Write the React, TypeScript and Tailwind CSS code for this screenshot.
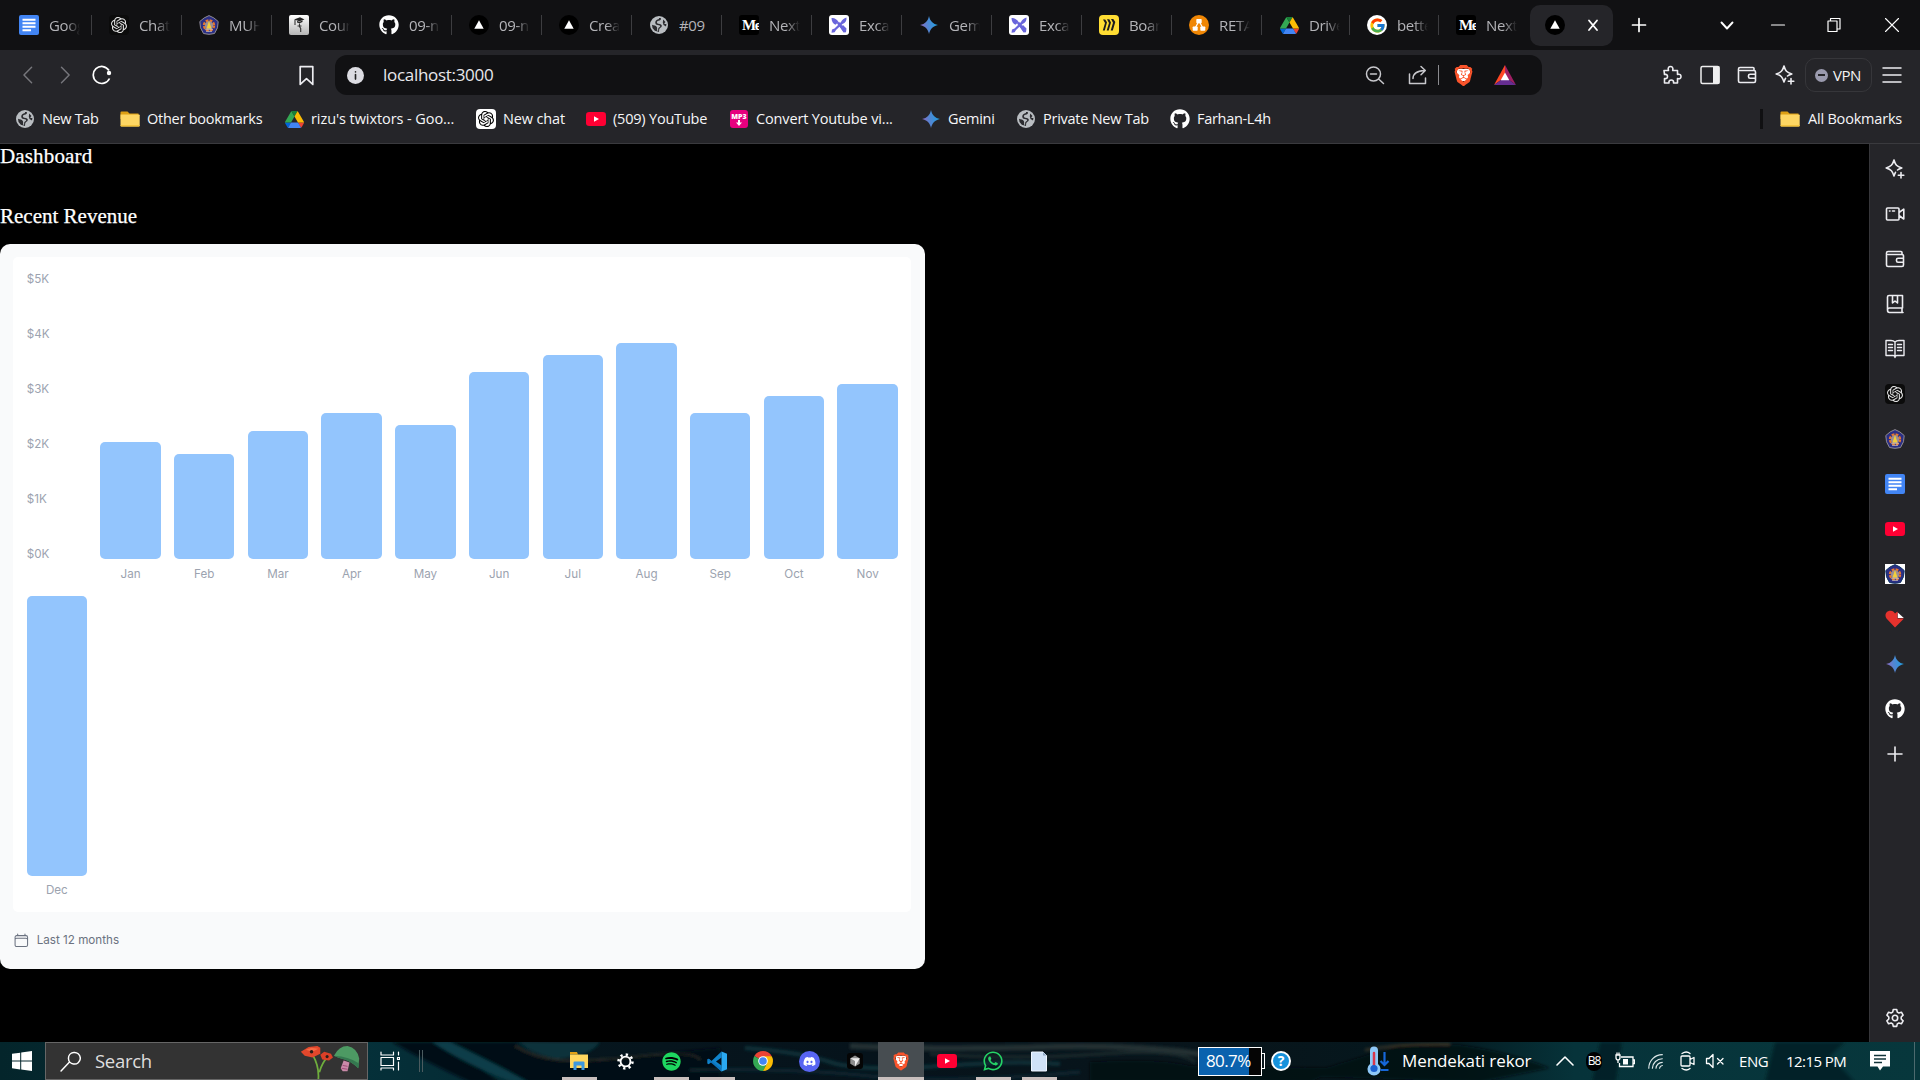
import React from 'react';
import { FcGoogle } from 'react-icons/fc';
import { FaDiscord, FaGithub, FaSpotify, FaWhatsapp } from 'react-icons/fa';
import { SiBrave, SiOpenai } from 'react-icons/si';

/* ---------- brand icons ---------- */

const Docs = () => (
  <svg viewBox="0 0 20 20" className="h-5 w-5">
    <rect width="20" height="20" rx="2" fill="#4285f4" />
    <path d="M3.5 4.7h13M3.5 8.3h13M3.5 11.8h13M3.5 15.3h8.5" stroke="#fff" strokeWidth="1.9" />
  </svg>
);

const ChatGpt = ({ light = false }: { light?: boolean }) => (
  <span className={`flex h-5 w-5 items-center justify-center rounded-[4px] ${light ? 'bg-white text-black' : 'bg-[#0b0b0b] text-[#e4e4e4]'}`}>
    <SiOpenai size={16} />
  </span>
);

const Emblem = ({ boxed = false }: { boxed?: boolean }) => (
  <svg viewBox="0 0 20 20" className="h-5 w-5">
    {boxed && <rect width="20" height="20" fill="#fff" />}
    <path d="M10 .6Q15 2.200 19.200 6.500 19.600 13 15.500 18.500 10 20.200 4.500 18.500.4 13 .8 6.500 5 2.200 10 .6Z" fill="#2b2f86" stroke={boxed ? '#123a63' : '#8f8a8c'} strokeWidth="1" strokeLinejoin="round" />
    <circle cx="10" cy="10.400" r="5" fill="none" stroke="#e8772e" strokeWidth="2.400" strokeDasharray="2.700 1.230" />
    <circle cx="10" cy="10.400" r="4.200" fill="#9b8f94" />
    <path d="M10 5.500 11 9l1.500 4.500h-5L9 9Z" fill="#f3cf3a" />
    <path d="M6 14.200h8M7 16.300h6" stroke="#d7cfc3" strokeWidth=".8" />
  </svg>
);

const Course = () => (
  <svg viewBox="0 0 20 20" className="h-5 w-5">
    <defs>
      <linearGradient id="course" x1="0" y1="0" x2="0" y2="1">
        <stop stopColor="#fff" />
        <stop offset="1" stopColor="#b5b5b5" />
      </linearGradient>
    </defs>
    <rect width="20" height="20" rx="2" fill="url(#course)" />
    <path d="m5 4.500 6-2.200L15.500 4.500l-5 1.800ZM8 6v1.500l2.500.8 3-1.200V5.500l-3 1.300Z" fill="#222" />
    <path d="M6 5v5M10.500 8.500v3l1.200 2V17M8.500 11h4" stroke="#333" strokeWidth="1.100" fill="none" />
  </svg>
);

const Next = () => (
  <svg viewBox="0 0 20 20" className="h-5 w-5 shrink-0">
    <circle cx="10" cy="10" r="10" fill="#000" />
    <path d="M10 5.200 14.700 13.800H5.300Z" fill="#fff" />
  </svg>
);

const Globe = () => (
  <svg viewBox="0 0 18 18" className="h-[18px] w-[18px]">
    <circle cx="9" cy="9" r="9" fill="#b9bdc1" />
    <path d="M10.800 2C11.500 4 10 4.600 8.500 4.700 6.500 5 6.500 7.500 8.300 7.700 10.500 7.800 12.200 8.500 11.800 10.300 11.300 12 9.500 11.800 9.200 13.500L9 16 4.800 14.800 2.500 12 2 8.800C4 9.500 5.800 9.600 6.800 11 7.500 12.300 6.800 13 7.200 14.500L8 15.500 8.200 12.500C8.500 11.200 10.300 11 10.200 10 10 9 8 9.300 6.500 8.700 4.500 7.700 5 4.200 7.500 3.500 8.800 3.100 9.200 3 9 2ZM13.200 3.500 15.500 6 14.200 7.500C15 8.300 16 8 16.500 7.800L16 10.500 13.500 9 12.800 6.500Z" fill="#2c2c30" />
  </svg>
);

const Medium = () => (
  <span className="flex h-5 w-5 items-center overflow-hidden rounded-[3px] bg-black pl-[3px] font-['Liberation_Serif'] text-[15px] font-bold leading-5 tracking-[-1.500px] text-white">
    Me
  </span>
);

const Excalidraw = () => (
  <svg viewBox="0 0 20 20" className="h-5 w-5">
    <rect width="20" height="20" rx="3" fill="#fff" />
    <path d="M2.500 3C5 2.500 8.500 4.500 9.500 7L6.500 9.800C4 9 2.500 6 2.500 3ZM8 8.500l2-1.800 6.500 8-2 2.300Z" fill="#6965db" />
    <path d="M17.500 2.500C15 3 13 5 12 7l-6.500 6.500-2.500 1-.5 3.200 3.200-.5 1.300-2.200L13.500 9C16.500 8 17.800 5.500 17.500 2.500ZM11.500 12.500l2.500-2.500 3.500 3.500-.5 3.700-2.500.3Z" fill="#6965db" />
  </svg>
);

const Gemini = () => (
  <svg viewBox="0 0 18 18" className="h-[18px] w-[18px]">
    <defs>
      <linearGradient id="gemini" x1="0" y1=".6" x2="1" y2=".4">
        <stop stopColor="#9168c0" />
        <stop offset=".4" stopColor="#5684d1" />
        <stop offset="1" stopColor="#1ba1e3" />
      </linearGradient>
    </defs>
    <path d="M9 0C10 5 13 8 18 9 13 10 10 13 9 18 8 13 5 10 0 9 5 8 8 5 9 0Z" fill="url(#gemini)" />
  </svg>
);

const Miro = () => (
  <svg viewBox="0 0 20 20" className="h-5 w-5">
    <rect width="20" height="20" rx="4" fill="#ffdd33" />
    <path d="M4 4.500h2.200L8 7.300 5.800 15.500H3.800L6 8ZM8 4.200h2.300L12 7.500 9.700 15.500H7.700L10 8ZM12 4H14.300L16.300 7 13.800 15.500H11.700L14 7.700Z" fill="#1c1c1e" />
  </svg>
);

const Drawio = () => (
  <svg viewBox="0 0 20 20" className="h-5 w-5">
    <circle cx="10" cy="10" r="10" fill="#f08705" />
    <path d="M10 6 6.200 13M10 6l3.800 7" stroke="#fff" strokeWidth="1.300" />
    <rect x="7.300" y="4" width="5.400" height="4.300" rx=".7" fill="#fff" />
    <rect x="3.700" y="11.500" width="5" height="4.300" rx=".7" fill="#fff" />
    <rect x="11.300" y="11.500" width="5" height="4.300" rx=".7" fill="#fff" />
  </svg>
);

const Drive = () => (
  <svg viewBox="0 0 87.300 78" className="h-[17px] w-[19px]">
    <path d="m6.600 66.850 3.850 6.650c.8 1.400 1.950 2.500 3.300 3.300l13.750-23.800h-27.500c0 1.550.4 3.100 1.200 4.500z" fill="#0066da" />
    <path d="m43.650 25-13.750-23.800c-1.350.8-2.500 1.900-3.300 3.300l-25.400 44a9.060 9.060 0 0 0 -1.200 4.500h27.500z" fill="#34a853" />
    <path d="m73.550 76.800c1.350-.8 2.500-1.900 3.300-3.300l1.600-2.750 7.650-13.250c.8-1.400 1.200-2.950 1.200-4.500h-27.502l5.852 11.500z" fill="#ea4335" />
    <path d="m43.650 25 13.750-23.800c-1.350-.8-2.900-1.200-4.500-1.200h-18.500c-1.600 0-3.150.45-4.500 1.200z" fill="#188038" />
    <path d="m59.800 53h-32.300l-13.750 23.800c1.350.8 2.900 1.200 4.500 1.200h50.800c1.600 0 3.150-.45 4.500-1.200z" fill="#4285f4" />
    <path d="m73.400 26.500-12.700-22c-.8-1.400-1.950-2.500-3.300-3.300l-13.750 23.800 16.150 28h27.450c0-1.550-.4-3.100-1.200-4.500z" fill="#fbbc04" />
  </svg>
);

const GoogleG = () => (
  <span className="flex h-5 w-5 items-center justify-center rounded-full bg-white">
    <FcGoogle size={17} />
  </span>
);

const Github = () => <FaGithub size={20} color="#fff" />;

const Folder = () => (
  <svg viewBox="0 0 20 16" className="h-4 w-5">
    <path d="M.5 1.500Q.5.500 1.500.5h6l2 2H18.500V8H.5Z" fill="#dd9f13" />
    <path d="M.5 3.500H19q.7 0 .7.8V14.500q0 1-1 1H1.500q-1 0-1-1Z" fill="#fdd663" />
    <path d="M.5 14H19.700V14.500q0 1-1 1H1.500q-1 0-1-1Z" fill="#f4c33d" />
  </svg>
);

const Youtube = () => (
  <svg viewBox="0 0 20 14" className="h-[14px] w-5">
    <rect width="20" height="14" rx="3.200" fill="#ff0033" />
    <path d="m8 4.200 5 2.800-5 2.800Z" fill="#fff" />
  </svg>
);

const Mp3 = () => (
  <span className="flex h-[18px] w-[18px] flex-col items-center rounded-[3px] bg-[#e6007e] pt-[3px] text-white">
    <span className="font-['Open_Sans'] text-[7px] font-extrabold leading-[7px]">MP3</span>
    <svg viewBox="0 0 8 6" className="h-[6px] w-2">
      <path d="M3 0h2v2.500h2L4 6 1 2.500h2Z" fill="#fff" />
    </svg>
  </span>
);

const Brave = ({ size = 'h-[23px] w-[21px]' }: { size?: string }) => (
  <span className={`relative flex items-center justify-center ${size}`}>
    <span className="absolute inset-x-[4px] bottom-[6px] top-[5px] bg-white" />
    <SiBrave color="#fb542b" className="relative h-full w-full" />
  </span>
);

const BraveRewards = () => (
  <svg viewBox="0 0 22 20" className="h-5 w-[22px]">
    <path d="M11 0 0 20 11 12Z" fill="#ff4724" />
    <path d="M11 0 22 20 11 12Z" fill="#9e1f63" />
    <path d="M0 20 11 12 22 20Z" fill="#662d91" />
    <path d="M11 7.500 15.300 15.300H6.700Z" fill="#fff" />
  </svg>
);

const Heart = () => (
  <svg viewBox="0 0 20 18" className="h-[18px] w-5">
    <path d="M10 17.500 1.500 8.500C-1 5 1.500.5 5.500.8 8 1 9.500 2.500 10 3.500L12.500 2.200V8.500H18.800L17.500 10Z" fill="#e5322d" />
    <path d="M10 3.500 12.500 1.500V4Z" fill="#e5322d" />
    <path d="M12.800 2.500 18.800 8H12.800Z" fill="#fff" />
  </svg>
);

const Chrome = () => (
  <svg viewBox="0 0 20 20" className="h-5 w-5">
    <path d="M10 10 1.340 5A10 10 0 0 1 18.660 5Z" fill="#ea4335" />
    <path d="M10 20A10 10 0 0 1 1.340 5L10 10 14 12.500Z" fill="#34a853" />
    <path d="M10 5.300H18.800A10 10 0 0 1 10 20L14.100 12.300Z" fill="#fbbc04" />
    <circle cx="10" cy="10" r="4.800" fill="#fff" />
    <circle cx="10" cy="10" r="3.800" fill="#4285f4" />
  </svg>
);

const Explorer = () => (
  <svg viewBox="0 0 18 18" className="h-[18px] w-[18px]">
    <path d="M0 0h7l1 2.500H0Z" fill="#e0a116" />
    <path d="M0 2.500H18V16H0Z" fill="#ffd75e" />
    <path d="M3.500 18V10.500q0-1 1-1h9q1 0 1 1V18h-3v-4.500h-5V18Z" fill="#3d98de" />
  </svg>
);

const VsCode = () => (
  <svg viewBox="0 0 20 20" className="h-[21px] w-5">
    <path d="M14.500 0 4.500 9.500 1.700 7.300.3 8.100v3.800l1.400.8 2.800-2.200L14.500 20V14L9 10l5.500-4Z" fill="#0f83cc" />
    <path d="M.3 8.100 1.700 7.300 14.500 17V20L.3 8.100Z" fill="#0b74bd" />
    <path d="M14.500 0 20 2.300V17.700L14.500 20Z" fill="#2aa9f2" />
  </svg>
);

const Cursor = () => (
  <svg viewBox="0 0 16 16" className="h-4 w-4">
    <rect width="16" height="16" rx="3" fill="#050505" />
    <path d="M8 2.500 12.700 5.200V10.800L8 13.500 3.300 10.800V5.200Z" fill="#8d8d8d" />
    <path d="M3.300 5.200H12.700L8 13.500V8Z" fill="#eee" />
  </svg>
);

const Paper = () => (
  <svg viewBox="0 0 16 20" className="h-[21px] w-4">
    <path d="M.5.500H12L15.500 4V19.500H.5Z" fill="#cfe2f7" stroke="#eef6ff" />
    <path d="M12 .5V4h3.500Z" fill="#90a9c6" />
  </svg>
);

/* ---------- line icons ---------- */

type LineProps = { d: string; size?: string; box?: string; width?: number; color?: string };

const Line = ({ d, size = 'h-5 w-5', box = '0 0 20 20', width = 1.6, color = '#ededf1' }: LineProps) => (
  <svg viewBox={box} className={`${size} shrink-0`} fill="none" stroke={color} strokeWidth={width} strokeLinecap="round" strokeLinejoin="round">
    <path d={d} />
  </svg>
);

const sparkle = 'M9 1C10.500 6 11.500 7.500 16.800 9 15 9.600 13.500 10.200 12.500 11M9 1C7.500 6 6 7.500 1.200 9c5 1.500 6.300 3 7.800 8 .5-1.500 1-2.800 1.500-3.700M16 13.500v5.500M13.300 16.200h5.500';
const camera = 'M2.500 4H13q1 0 1 1v10q0 1-1 1H2.500q-1 0-1-1V5q0-1 1-1ZM14 8.500 18.800 5.200V15L14 11.500M4.500 7h.5M7.500 7h2';
const wallet = 'M17 5.500V3.500q0-1-1-1H3Q1.500 2.500 1.500 4V16q0 1.500 1.500 1.500H17q1.500 0 1.500-1.500V7q0-1.500-1.500-1.500H3M18.500 9.200H13q-1.500 0-1.500 1.500v1q0 1.500 1.500 1.500h5.500';
const savedBook = 'M17.500 14H4.500Q2.500 14 2.500 16V3q0-1.500 1.500-1.500H17.500ZM2.500 16q0 2.500 2 2.500H18M17 14v4.500M7.500 1.500V9L10 7l2.500 2V1.500';
const reader = 'M10 3Q8.500 1.500 6 1.500H1V16.500H8Q10 16.500 10 18.500 10 16.500 12 16.500h7V1.500H14Q11.500 1.500 10 3ZM10 3V17M3.500 5.500h4M3.500 8.500h4M3.500 11.500h4M12.500 5.500h4M12.500 8.500h4M12.500 11.500h4';
const puzzle = 'M2 5.500H6.500C5.500 2.500 7 1.500 8.500 1.500S11.500 2.500 10.700 5.500H15.500V9.500C18 8.700 19 10 19 11.500S18 14.300 15.500 13.500V18H11.500C12 15.500 10.500 15 9.300 15S6.500 15.500 7 18H2.500V13.500C5 14 5.500 12.500 5.500 11.500S5 9 2.500 9.500Z';
const gear = 'M8.300 1.500h3.400l.6 2.600 1.600.9 2.500-.8 1.700 2.900-1.900 1.900v2l1.900 1.900-1.700 2.900-2.500-.8-1.600.9-.6 2.500H8.300l-.6-2.500-1.600-.9-2.500.8-1.700-2.900L3.800 11V9L1.900 7.100l1.700-2.900 2.500.8 1.600-.9ZM12.700 10a2.700 2.700 0 1 1-5.400 0 2.700 2.700 0 0 1 5.400 0Z';

/* ---------- tab strip ---------- */

const tabs: { icon: React.ReactNode; label: string; width: string }[] = [
  { icon: <Docs />, label: 'Goog', width: 'w-[90px]' },
  { icon: <ChatGpt />, label: 'Chat', width: 'w-[90px]' },
  { icon: <Emblem />, label: 'MUH', width: 'w-[90px]' },
  { icon: <Course />, label: 'Cour', width: 'w-[90px]' },
  { icon: <Github />, label: '09-n', width: 'w-[90px]' },
  { icon: <Next />, label: '09-n', width: 'w-[90px]' },
  { icon: <Next />, label: 'Crea', width: 'w-[90px]' },
  { icon: <Globe />, label: '#09', width: 'w-[90px]' },
  { icon: <Medium />, label: 'Next', width: 'w-[90px]' },
  { icon: <Excalidraw />, label: 'Exca', width: 'w-[90px]' },
  { icon: <Gemini />, label: 'Gem', width: 'w-[90px]' },
  { icon: <Excalidraw />, label: 'Exca', width: 'w-[90px]' },
  { icon: <Miro />, label: 'Boar', width: 'w-[90px]' },
  { icon: <Drawio />, label: 'RETA', width: 'w-[90px]' },
  { icon: <Drive />, label: 'Drive', width: 'w-[88px]' },
  { icon: <GoogleG />, label: 'bette', width: 'w-[89px]' },
  { icon: <Medium />, label: 'Next', width: 'w-[88px]' },
];

const TabStrip = () => (
  <div className="flex h-[50px] shrink-0 items-center bg-[#111113] pl-[2px]">
    {tabs.map((t, i) => (
      <div key={i} className={`flex h-5 shrink-0 items-center border-r pl-[17px] ${i === tabs.length - 1 ? 'border-transparent' : 'border-[#3d3d40]'} ${t.width}`}>
        <span className="flex w-5 shrink-0 justify-center">{t.icon}</span>
        <span className={`ml-[10px] w-[31px] overflow-hidden whitespace-nowrap text-[15px] tracking-[-0.35px] text-[#b4b4b8] ${t.label === '#09' ? '' : '[mask-image:linear-gradient(to_right,black_55%,transparent)]'}`}>{t.label}</span>
      </div>
    ))}
    <div className="ml-[3px] flex h-[41px] w-[83px] shrink-0 items-center rounded-[10px] bg-[#252529] pl-[15px]">
      <Next />
      <Line d="m6 5.500 8 9.500M14 5.500l-8 9.500" size="ml-[18px] h-5 w-5" width={1.8} color="#fff" />
    </div>
    <Line d="M10 3.500v13M3.500 10h13" size="ml-[16px] h-5 w-5" width={1.7} color="#fff" />
    <Line d="m4.500 7.500 5.500 6 5.500-6" size="ml-[68px] h-5 w-5" width={1.9} color="#fff" />
    <Line d="M3.500 10h13" size="ml-[31px] h-5 w-5" width={1.2} color="#fff" />
    <Line d="M4 6h9v10.500H4ZM6.500 6V3.500H16V14H13" size="ml-[36px] h-5 w-5" width={1.2} color="#fff" />
    <Line d="m3.500 3.500 13 13M16.500 3.500l-13 13" size="ml-[38px] h-5 w-5" width={1.1} color="#fff" />
  </div>
);

/* ---------- toolbar ---------- */

const Toolbar = () => (
  <div className="flex h-[50px] shrink-0 items-center">
    <Line d="M14 1.500 5.500 10l8.500 8.500" size="ml-[19px] h-5 w-[18px]" color="#77777c" />
    <Line d="M5 1.500 13.500 10 5 18.500" size="ml-[20px] h-5 w-[18px]" color="#77777c" />
    <svg viewBox="0 0 20 20" className="ml-[17px] h-5 w-5 shrink-0" fill="none" stroke="#fff" strokeWidth="1.700">
      <path d="M17 5.500A8.500 8.500 0 1 0 17.500 13.500" />
      <circle cx="17" cy="8" r="2.200" fill="#fff" stroke="none" />
    </svg>
    <Line d="M4 1.500h12V18.500L10 13 4 18.500Z" size="ml-[184px] h-[21px] w-[21px]" width={1.6} />
    <div className="ml-[18px] flex h-10 w-[1207px] shrink-0 items-center rounded-[12px] bg-[#111113]">
      <span className="ml-[12px] flex h-[17px] w-[17px] items-center justify-center rounded-full bg-[#dcdce2]">
        <Line d="M10 8.500v7M10 4.500v.2" size="h-[13px] w-[13px]" width={2.5} color="#222" />
      </span>
      <span className="ml-[19px] w-[982px] text-[17px] tracking-[-0.3px] text-[#e8e8ec]">localhost:3000</span>
      <Line d="M8.500 16a7 7 0 1 1 0-14 7 7 0 0 1 0 14ZM13.600 14 18.500 18.500M5.500 9h6" size="h-5 w-5" width={1.5} color="#c8c8cc" />
      <Line d="M2.500 9V18.500H18.500V13M6 13.500C6 8.500 10 6 17.500 5.500M14 1.500l4.300 4L14 9.800" size="ml-[22px] h-5 w-5" width={1.500} color="#c8c8cc" />
      <span className="ml-[11px] h-5 w-px bg-[#8b8b8f]" />
      <span className="ml-[14px]"><Brave /></span>
      <span className="ml-[20px]"><BraveRewards /></span>
    </div>
    <Line d={puzzle} size="ml-[120px] h-5 w-5" />
    <svg viewBox="0 0 20 20" className="ml-[18px] h-5 w-5 shrink-0">
      <rect x="1" y="1.500" width="18" height="17" rx="1.500" fill="none" stroke="#eee" strokeWidth="1.500" />
      <rect x="13" y="1.500" width="6.500" height="17" fill="#eee" />
    </svg>
    <Line d={wallet} size="ml-[17px] h-5 w-5" />
    <Line d={sparkle} size="ml-[18px] h-5 w-5" />
    <div className="ml-[10px] flex h-[34px] w-[67px] shrink-0 items-center rounded-[10px] border border-[#36363a] pl-[9px]">
      <span className="flex h-[13px] w-[13px] items-center justify-center rounded-full bg-[#9a9aae]">
        <span className="h-[2px] w-[7px] bg-[#252529]" />
      </span>
      <span className="ml-[5px] text-[15px] tracking-[-0.5px] text-[#f4f4f4]">VPN</span>
    </div>
    <Line d="M1 3h18M1 10h18M1 17h18" size="ml-[10px] h-5 w-5" width={1.500} />
  </div>
);

const bookmarks: { icon: React.ReactNode; label: string; width: string; text: string }[] = [
  { icon: <Globe />, label: 'New Tab', width: 'w-[105px]', text: 'tracking-[-0.35px]' },
  { icon: <Folder />, label: 'Other bookmarks', width: 'w-[164px]', text: 'tracking-[-0.25px]' },
  { icon: <Drive />, label: "rizu's twixtors - Goo...", width: 'w-[192px]', text: 'tracking-[-0.08px]' },
  { icon: <ChatGpt light />, label: 'New chat', width: 'w-[110px]', text: 'tracking-[-0.15px]' },
  { icon: <Youtube />, label: '(509) YouTube', width: 'w-[143px]', text: 'tracking-[-0.2px]' },
  { icon: <Mp3 />, label: 'Convert Youtube vi...', width: 'w-[192px]', text: 'tracking-[-0.15px]' },
  { icon: <Gemini />, label: 'Gemini', width: 'w-[95px]', text: 'tracking-[-0.3px]' },
  { icon: <Globe />, label: 'Private New Tab', width: 'w-[154px]', text: 'tracking-[-0.25px]' },
  { icon: <Github />, label: 'Farhan-L4h', width: 'w-[110px]', text: 'tracking-[-0.3px]' },
];

const BookmarkBar = () => (
  <div className="flex h-[44px] shrink-0 items-center border-b border-[#3a3a3e] pb-[5px] pl-[15px] text-[14.500px] text-[#f6f6f8]">
    {bookmarks.map((b) => (
      <div key={b.label} className={`flex shrink-0 items-center ${b.width}`}>
        <span className="flex w-5 shrink-0 justify-center">{b.icon}</span>
        <span className={`ml-[7px] whitespace-nowrap ${b.text}`}>{b.label}</span>
      </div>
    ))}
    <span className="ml-[480px] h-5 w-[3px] shrink-0 bg-[#101012]" />
    <span className="ml-[17px] flex items-center whitespace-nowrap">
      <Folder />
      <span className="ml-[8px] tracking-[-0.2px]">All Bookmarks</span>
    </span>
  </div>
);

/* ---------- dashboard ---------- */

const revenue = [
  { month: 'Jan', revenue: 2000 },
  { month: 'Feb', revenue: 1800 },
  { month: 'Mar', revenue: 2200 },
  { month: 'Apr', revenue: 2500 },
  { month: 'May', revenue: 2300 },
  { month: 'Jun', revenue: 3200 },
  { month: 'Jul', revenue: 3500 },
  { month: 'Aug', revenue: 3700 },
  { month: 'Sep', revenue: 2500 },
  { month: 'Oct', revenue: 2800 },
  { month: 'Nov', revenue: 3000 },
  { month: 'Dec', revenue: 4800 },
];
const topLabel = 5000;
const chartHeight = 291.67;

const Dashboard = () => (
  <main className="min-w-0 flex-1 bg-black">
    <h1 className="h-[25px] font-['Liberation_Serif'] text-[21px] leading-[25px] tracking-[0.15px] text-white [-webkit-text-stroke:0.25px_white]">Dashboard</h1>
    <h2 className="mt-[35px] h-[25px] font-['Liberation_Serif'] text-[21px] leading-[25px] text-white [-webkit-text-stroke:0.25px_white]">Recent Revenue</h2>
    <div className="mt-[15px] h-[725px] w-[924.500px] rounded-[10px] bg-[#f9fafb] p-[13.333px] font-['Inter'] text-[11.667px] leading-[16.667px]">
      <div className="grid grid-cols-12 items-end gap-[13.333px] rounded-[5px] bg-white p-[13.333px] text-[#9ca3af]">
        <div className="mb-[20px] flex h-[291.667px] flex-col justify-between">
          {['$5K', '$4K', '$3K', '$2K', '$1K', '$0K'].map((l) => (
            <p key={l}>{l}</p>
          ))}
        </div>
        {revenue.map((r) => (
          <div key={r.month} className="flex flex-col items-center gap-[6.667px]">
            <div className="w-full rounded-[5px] bg-[#93c5fd]" style={{ height: (chartHeight / topLabel) * r.revenue }} />
            <p>{r.month}</p>
          </div>
        ))}
      </div>
      <div className="flex items-center pt-[20px]">
        <svg viewBox="0 0 24 24" className="h-[16.667px] w-[16.667px]" fill="none" stroke="#6b7280" strokeWidth="1.500" strokeLinecap="round" strokeLinejoin="round">
          <path d="M6.750 3v2.250M17.250 3v2.250M3 18.750V7.500a2.250 2.250 0 0 1 2.250-2.250h13.500A2.250 2.250 0 0 1 21 7.500v11.250m-18 0A2.250 2.250 0 0 0 5.250 21h13.500A2.250 2.250 0 0 0 21 18.750m-18 0v-7.500A2.250 2.250 0 0 1 5.250 9h13.500A2.250 2.250 0 0 1 21 11.250v7.500" />
        </svg>
        <span className="ml-[6.667px] text-[#6b7280]">Last 12 months</span>
      </div>
    </div>
  </main>
);

/* ---------- side panel ---------- */

const sideItems: React.ReactNode[] = [
  <Line d={sparkle} />,
  <Line d={camera} />,
  <Line d={wallet} />,
  <Line d={savedBook} />,
  <Line d={reader} width={1.4} />,
  <ChatGpt />,
  <Emblem />,
  <Docs />,
  <Youtube />,
  <Emblem boxed />,
  <Heart />,
  <Gemini />,
  <Github />,
  <Line d="M10 3v14M3 10h14" />,
];

const SidePanel = () => (
  <aside className="flex w-[51px] shrink-0 flex-col items-center border-l border-[#36363a] pt-[2px]">
    {sideItems.map((item, i) => (
      <span key={i} className="flex h-[45px] w-full items-center justify-center">{item}</span>
    ))}
    <span className="mb-[14px] mt-auto"><Line d={gear} /></span>
  </aside>
);

/* ---------- taskbar ---------- */

const apps: { icon: React.ReactNode; open?: boolean; active?: boolean }[] = [
  { icon: <Explorer />, open: true },
  { icon: <svg viewBox="0 0 20 20" className="h-[17px] w-[17px]" fill="none" stroke="#fff"><circle cx="10" cy="10" r="5.800" strokeWidth="2.200" /><circle cx="10" cy="10" r="8.200" strokeWidth="3" strokeDasharray="2.700 3.740" /></svg> },
  { icon: <span className="rounded-full bg-black"><FaSpotify size={19} color="#1ed760" /></span>, open: true },
  { icon: <VsCode />, open: true },
  { icon: <Chrome /> },
  { icon: <span className="flex h-[21px] w-[21px] items-center justify-center rounded-full bg-[#5865f2]"><FaDiscord size={13} color="#fff" /></span> },
  { icon: <Cursor /> },
  { icon: <Brave size="h-[21px] w-[18px]" />, active: true },
  { icon: <Youtube /> },
  { icon: <FaWhatsapp size={22} color="#25d366" />, open: true },
  { icon: <Paper />, open: true },
];

const Poppies = () => (
  <svg viewBox="0 0 62 37" className="h-[36px] w-[62px]">
    <path d="M18 37Q19 24 12 12M19 30Q22 20 27 15" fill="none" stroke="#6fae3d" strokeWidth="1.800" />
    <path d="M0 9 5 6 8 4 17 3 20 5 20 11 12 15 4 13Z" fill="#e2472c" />
    <path d="M5 7 11 5 18 6 12 9Z" fill="#f56a45" />
    <circle cx="11" cy="9" r="1.800" fill="#2c1c1a" />
    <path d="M20 12 24 9 31 11 33 15 29 18 22 17Z" fill="#dc4028" />
    <circle cx="27" cy="14" r="1.600" fill="#2c1c1a" />
    <path d="M44 18 50 20 48 29 43 29 41 26Z" fill="#c98aa8" />
    <path d="M43 23 48 24M42 26 48 27" stroke="#a14a78" />
    <path d="M34 13Q39 3 48 3 58 5 60 16L59 26Q52 19 45 17T34 13Z" fill="#4d9a63" />
    <path d="M34 13Q50 14 60 21L59 26Q52 19 45 17T34 13Z" fill="#357850" />
  </svg>
);

const Taskbar = () => (
  <div className="relative flex h-[38px] shrink-0 items-center overflow-hidden bg-[#04141a]">
    <svg viewBox="0 0 1920 38" className="absolute inset-0 h-full w-full" preserveAspectRatio="none">
      <defs>
        <linearGradient id="wallpaper">
          <stop stopColor="#04252b" />
          <stop offset=".19" stopColor="#053039" />
          <stop offset=".26" stopColor="#052a33" />
          <stop offset=".29" stopColor="#06161e" />
          <stop offset=".45" stopColor="#06131b" />
          <stop offset=".65" stopColor="#08151b" />
          <stop offset=".75" stopColor="#04181e" />
          <stop offset=".82" stopColor="#06333a" />
          <stop offset="1" stopColor="#07373c" />
        </linearGradient>
        <filter id="soft" x="-5%" y="-50%" width="110%" height="200%">
          <feGaussianBlur stdDeviation="1.500" />
        </filter>
      </defs>
      <rect width="1920" height="38" fill="url(#wallpaper)" />
      <g filter="url(#soft)">
        <path d="M392 0H432Q470 18 500 40H470Q430 22 392 0ZM450 0H515Q530 14 560 18L590 18 720 6 720 40H528Q500 24 450 0Z" fill="#030b12" />
        <path d="M432 0 450 0Q500 24 528 40H512Q465 22 432 0Z" fill="#0a3d48" />
        <path d="M520 0H600Q592 14 558 17 530 12 520 0Z" fill="#07323a" />
        <path d="M515 4Q535 16 560 18T640 14 700 18" fill="none" stroke="#4b4636" strokeWidth="1.200" opacity=".8" />
        <path d="M745 6Q800 10 830 20T940 24 1060 22" fill="none" stroke="#16454c" strokeWidth="4" opacity=".6" />
        <path d="M690 28Q790 26 870 34T1080 30" fill="none" stroke="#12303a" strokeWidth="3" opacity=".7" />
        <path d="M850 4Q950 8 1040 5T1200 12" fill="none" stroke="#2c3a3c" strokeWidth="6" opacity=".7" />
        <path d="M930 12Q1020 18 1100 12T1195 20" fill="none" stroke="#233234" strokeWidth="3" opacity=".7" />
        <path d="M1090 20Q1160 16 1190 24L1340 26 1310 40H1090ZM1400 3H1460Q1510 10 1550 26L1480 40 1300 34Z" fill="#030c12" opacity=".75" />
        <path d="M1365 8Q1400 1 1450 2" stroke="#6a5031" strokeWidth="2" fill="none" opacity=".6" />
        <path d="M1600 0H1622L1616 40H1592ZM1775 0H1845L1830 14 1855 40H1765Z" fill="#041d22" opacity=".75" />
      </g>
    </svg>
    <div className="relative flex h-full w-full items-center">
      <svg viewBox="0 0 20 20" className="ml-[12px] h-5 w-5 shrink-0" fill="#fff">
        <path d="M0 2.800 8.200 1.700V9.600H0ZM9.200 1.500 20 0V9.600H9.200ZM0 10.500H8.200V18.400L0 17.200ZM9.200 10.500H20V20L9.200 18.500Z" />
      </svg>
      <div className="ml-[13px] flex h-full w-[323px] shrink-0 items-center border border-[#666] bg-[#333]">
        <Line d="M12.800 12.300a5.500 5.500 0 1 0 0-10.800 5.500 5.500 0 0 0 0 10.900ZM8.600 11 1 19" size="ml-[14px] h-[21px] w-[21px]" width={1.400} color="#fff" />
        <span className="ml-[14px] w-[205px] text-[18.500px] tracking-[-0.3px] text-[#dedede]">Search</span>
        <Poppies />
      </div>
      <Line d="M1 1V4H13.500V1M1 6.500H13.500V14.500H1ZM1 19V17H13.500V19M18.500 1V4M18.500 11V19M17.500 6.500h2v2h-2Z" size="ml-[12px] h-5 w-5" width={1.200} color="#fff" />
      <span className="ml-[19px] h-[22px] w-[4px] shrink-0 border-x border-[#4b5b5f]" />
      <div className="ml-[133px] flex h-full shrink-0">
        {apps.map((a, i) => (
          <div key={i} className={`relative flex w-[46px] items-center justify-center ${a.active ? 'bg-[#474d51]' : ''}`}>
            {a.icon}
            {a.open && <span className="absolute bottom-0 h-[3px] w-[35px] bg-[#c9bfbd]" />}
            {a.active && <span className="absolute bottom-0 h-[3px] w-full bg-[#c9bfbd]" />}
          </div>
        ))}
      </div>
      <div className="ml-[136px] flex h-[29px] w-[64px] shrink-0 items-center border border-white bg-[linear-gradient(to_right,#0a62ae_80%,#050505_80%)] pl-[7px] text-[17px] tracking-[-0.6px] text-white">80.7%</div>
      <span className="h-4 w-[3px] border border-l-0 border-white" />
      <span className="ml-[6px] flex h-5 w-5 shrink-0 items-center justify-center rounded-full border-2 border-white bg-[#1792dc] text-[14px] font-bold leading-none text-white">?</span>
      <svg viewBox="0 0 24 30" className="ml-[75px] h-[30px] w-6 shrink-0">
        <path d="M4 4.500a4 4 0 0 1 8 0V18a6.500 6.500 0 1 1-8 0Z" fill="#8ec8f8" />
        <path d="M8 7V20" stroke="#d9364b" strokeWidth="2.500" strokeLinecap="round" />
        <circle cx="8" cy="22.500" r="3.600" fill="#1a5fd0" />
        <path d="M18.500 6V18M14.500 15l4 4 4-4M14.500 24h8" stroke="#1667d9" strokeWidth="2.200" fill="none" />
      </svg>
      <span className="ml-[12px] w-[152px] shrink-0 whitespace-nowrap text-[17px] tracking-[-0.1px] text-white">Mendekati rekor</span>
      <Line d="M2 14 10 6l8 8" size="ml-px h-5 w-5" color="#fff" />
      <span className="ml-[11px] flex h-[19px] w-4 shrink-0 items-center justify-center rounded-full bg-black text-[12px] tracking-[-1px] text-white">B8</span>
      <svg viewBox="0 0 20 20" className="ml-[13px] h-5 w-5 shrink-0">
        <path d="M6 6H18V15.500H4.500V12M18 9h1.500v3.500H18M1 4V6.500Q1 9 3 9T5 6.500V4ZM2 1.500V4M4 1.500V4M3 9v3" fill="none" stroke="#fff" strokeWidth="1.300" />
        <path d="M8 8h5v5.500H8Z" fill="#fff" />
      </svg>
      <Line d="M2 18A15 15 0 0 1 17 3M6 18A11 11 0 0 1 17 7.500M10 18a7 7 0 0 1 7-6.500M14 18a3.500 3.500 0 0 1 3-3" size="ml-[12px] h-[18px] w-[18px]" width={1.300} color="#dfe8e9" />
      <Line d="M4 5H11q1 0 1 1v8q0 1-1 1H4q-1 0-1-1V6q0-1 1-1ZM12 8.500l4-2v7l-4-2M4 2.500Q8.500-.5 12 2.500M4 17.500Q8.500 20.500 12 17.500" size="ml-[13px] h-5 w-5" width={1.300} color="#fff" />
      <Line d="M1.500 7.500H4L8 3.500V16.500L4 12.500H1.500ZM12.500 7.500l5.500 5.500M18 7.500 12.500 13" size="ml-[7px] h-5 w-5" width={1.300} color="#fff" />
      <span className="ml-[14px] w-[47px] shrink-0 text-[15px] tracking-[-0.4px] text-white">ENG</span>
      <span className="w-[83px] shrink-0 whitespace-nowrap text-[15px] tracking-[-0.55px] text-white">12:15 PM</span>
      <svg viewBox="0 0 20 20" className="ml-px h-5 w-5 shrink-0">
        <path d="M0 0H20V15.500H13L10 19.500 7.500 15.500H0Z" fill="#fff" />
        <path d="M4 4.500h12M4 8h12M4 11.500h8" stroke="#12343a" strokeWidth="1.300" />
      </svg>
      <span className="ml-auto mr-[5px] h-full w-px bg-[#4c6a6e]" />
    </div>
  </div>
);

export default function App() {
  return (
    <div className="flex h-[1080px] w-[1920px] flex-col overflow-hidden bg-[#252529] font-['Open_Sans',sans-serif]">
      <TabStrip />
      <Toolbar />
      <BookmarkBar />
      <div className="flex min-h-0 flex-1">
        <Dashboard />
        <SidePanel />
      </div>
      <Taskbar />
    </div>
  );
}
